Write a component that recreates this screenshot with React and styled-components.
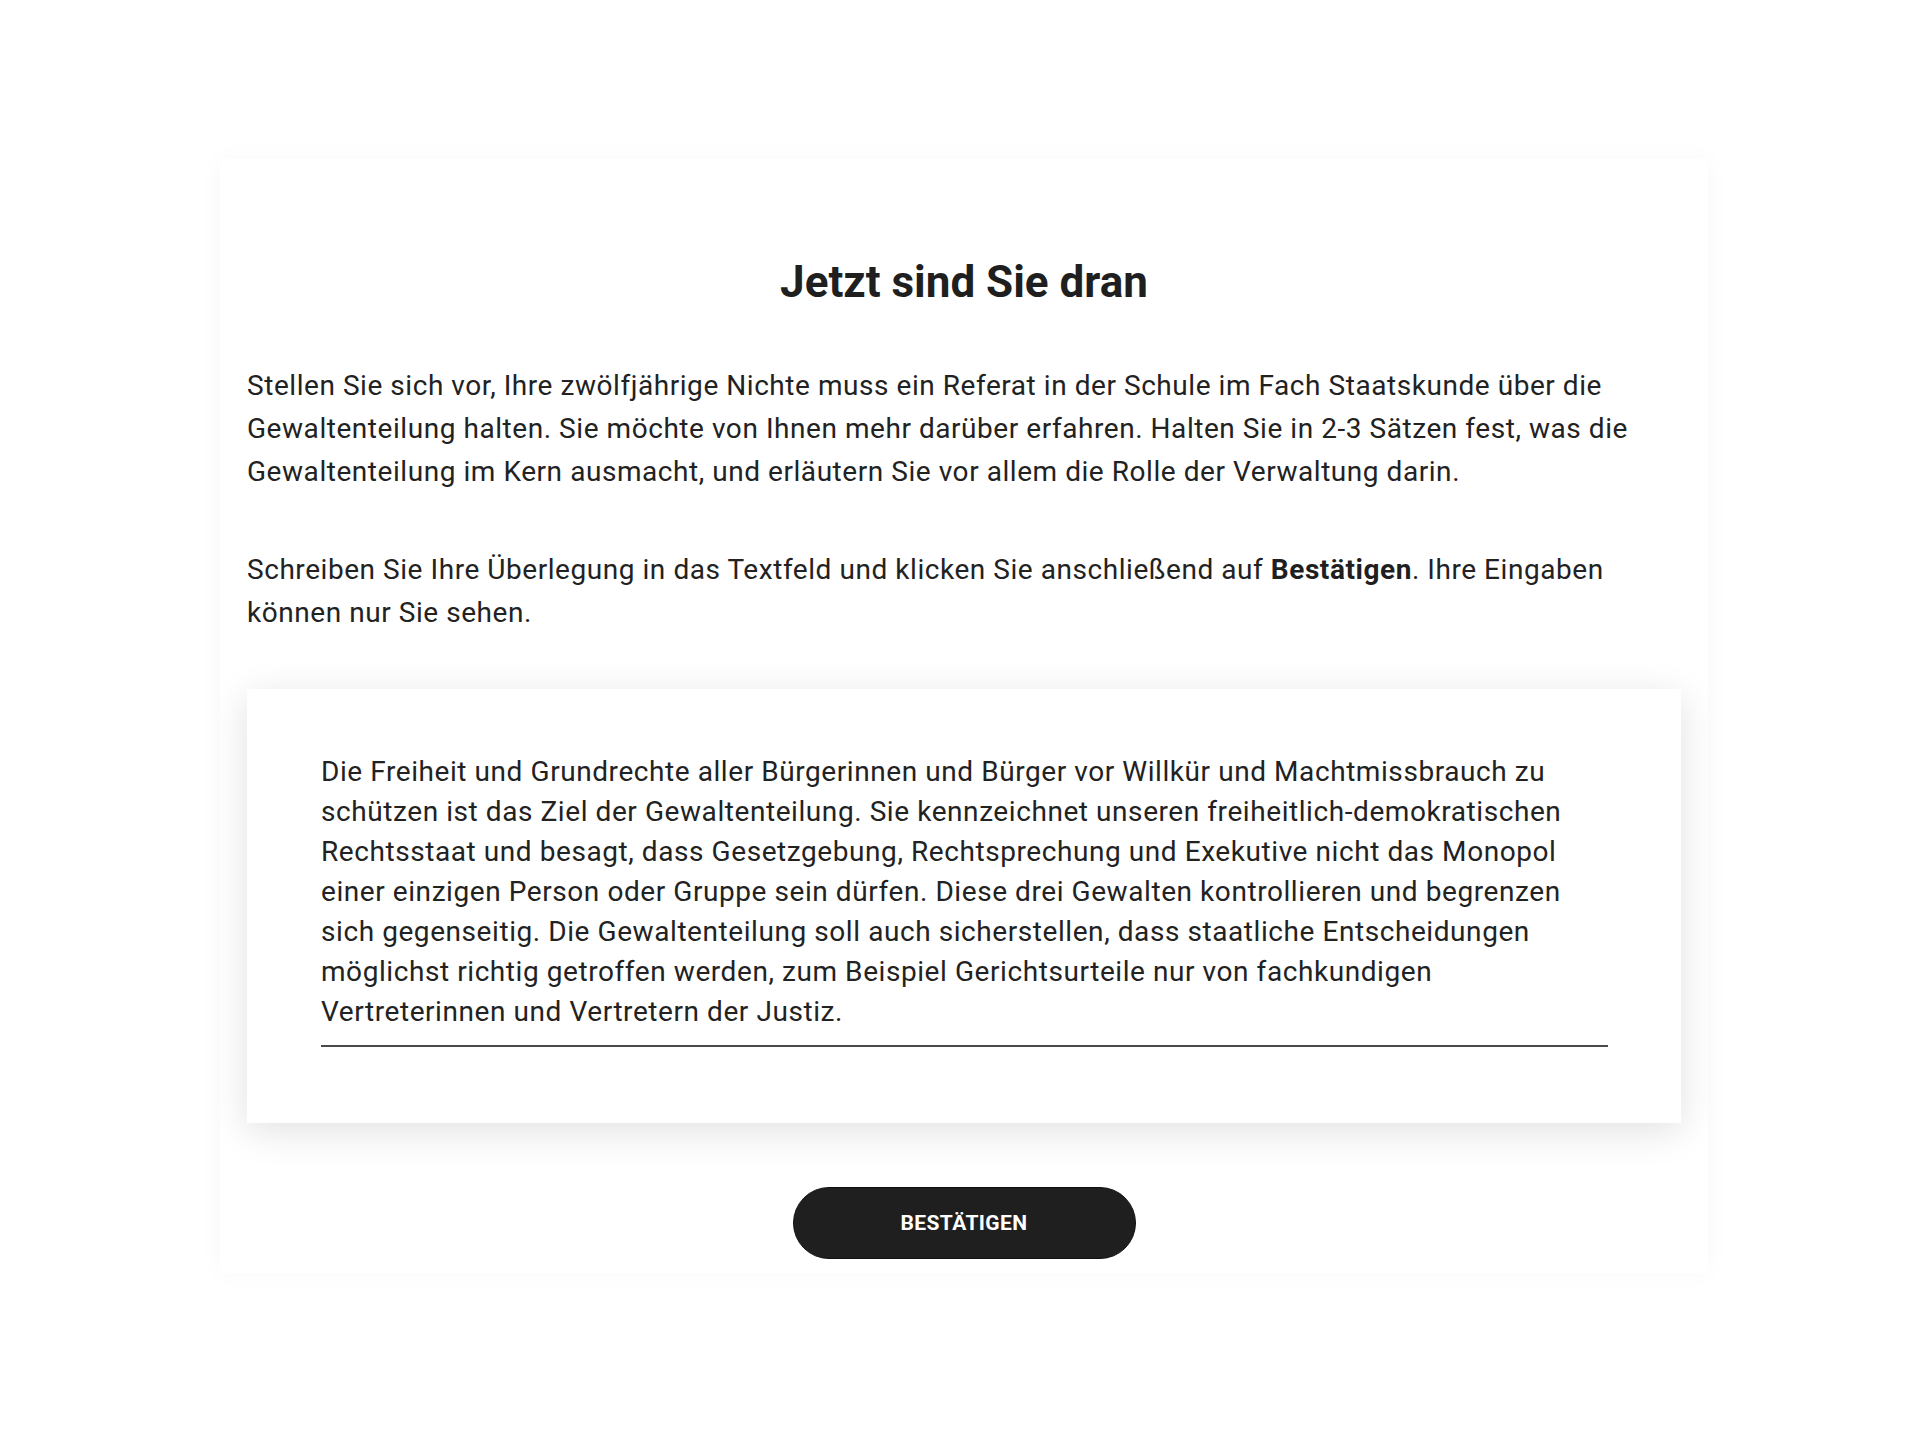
import React from "react";
import styled, { createGlobalStyle } from "styled-components";

const GlobalStyle = createGlobalStyle`
  body {
    margin: 0;
    background: #ffffff;
    font-family: Roboto, "Liberation Sans", sans-serif;
    color: #222222;
  }
`;

const answer =
  "Die Freiheit und Grundrechte aller Bürgerinnen und Bürger vor Willkür und Machtmissbrauch zu schützen ist das Ziel der Gewaltenteilung. Sie kennzeichnet unseren freiheitlich-demokratischen Rechtsstaat und besagt, dass Gesetzgebung, Rechtsprechung und Exekutive nicht das Monopol einer einzigen Person oder Gruppe sein dürfen. Diese drei Gewalten kontrollieren und begrenzen sich gegenseitig. Die Gewaltenteilung soll auch sicherstellen, dass staatliche Entscheidungen möglichst richtig getroffen werden, zum Beispiel Gerichtsurteile nur von fachkundigen Vertreterinnen und Vertretern der Justiz.";

const Task = () => {
  return (
    <Page>
      <GlobalStyle />
      <Panel>
        <Title>Jetzt sind Sie dran</Title>
        <Intro>
          Stellen Sie sich vor, Ihre zwölfjährige Nichte muss ein Referat in der Schule im Fach
          Staatskunde über die Gewaltenteilung halten. Sie möchte von Ihnen mehr darüber erfahren.
          Halten Sie in 2-3 Sätzen fest, was die Gewaltenteilung im Kern ausmacht, und erläutern Sie
          vor allem die Rolle der Verwaltung darin.
        </Intro>
        <Intro>
          Schreiben Sie Ihre Überlegung in das Textfeld und klicken Sie anschließend auf{" "}
          <strong>Bestätigen</strong>. Ihre Eingaben können nur Sie sehen.
        </Intro>
        <Card>
          <Answer defaultValue={answer} spellCheck={false} />
        </Card>
        <Actions>
          <Confirm type="button">Bestätigen</Confirm>
        </Actions>
      </Panel>
    </Page>
  );
};

const Page = styled.div`
  padding: 159px 0 167px 220px;
`;

const Panel = styled.div`
  width: 1434px;
  padding: 99px 27px 14px 27px;
  background: #ffffff;
  box-shadow: 0 0 24px rgba(0, 0, 0, 0.03);
`;

const Title = styled.h1`
  margin: 0 0 58px;
  text-align: center;
  font-size: 44px;
  line-height: 48px;
  font-weight: 700;
  color: #1f1f1f;
`;

const Intro = styled.p`
  margin: 0 30px 55px 0;
  font-size: 28px;
  line-height: 43px;
  letter-spacing: 0.55px;
  color: #222222;

  strong {
    font-weight: 700;
    color: #1f1f1f;
  }
`;

const Card = styled.div`
  margin-top: 55px;
  padding: 63px 73px 76px 74px;
  background: #ffffff;
  box-shadow: 0 8px 36px rgba(0, 0, 0, 0.12);
`;

const Answer = styled.textarea`
  display: block;
  box-sizing: border-box;
  width: 100%;
  height: 295px;
  margin: 0;
  padding: 0 24px 13px 0;
  border: none;
  border-bottom: 2px solid #4a4a4a;
  outline: none;
  resize: none;
  overflow: hidden;
  background: transparent;
  font-family: Roboto, "Liberation Sans", sans-serif;
  font-size: 28px;
  line-height: 40px;
  letter-spacing: 0.57px;
  color: #222222;
`;

const Actions = styled.div`
  display: flex;
  justify-content: center;
  padding: 64px 0 0;
`;

const Confirm = styled.button`
  width: 343px;
  height: 72px;
  border: 1px solid #111111;
  border-radius: 36px;
  background: #1f1f1f;
  color: #ffffff;
  font-family: Roboto, "Liberation Sans", sans-serif;
  font-size: 21px;
  font-weight: 700;
  letter-spacing: 0.4px;
  text-transform: uppercase;
  cursor: pointer;
`;

export default Task;
